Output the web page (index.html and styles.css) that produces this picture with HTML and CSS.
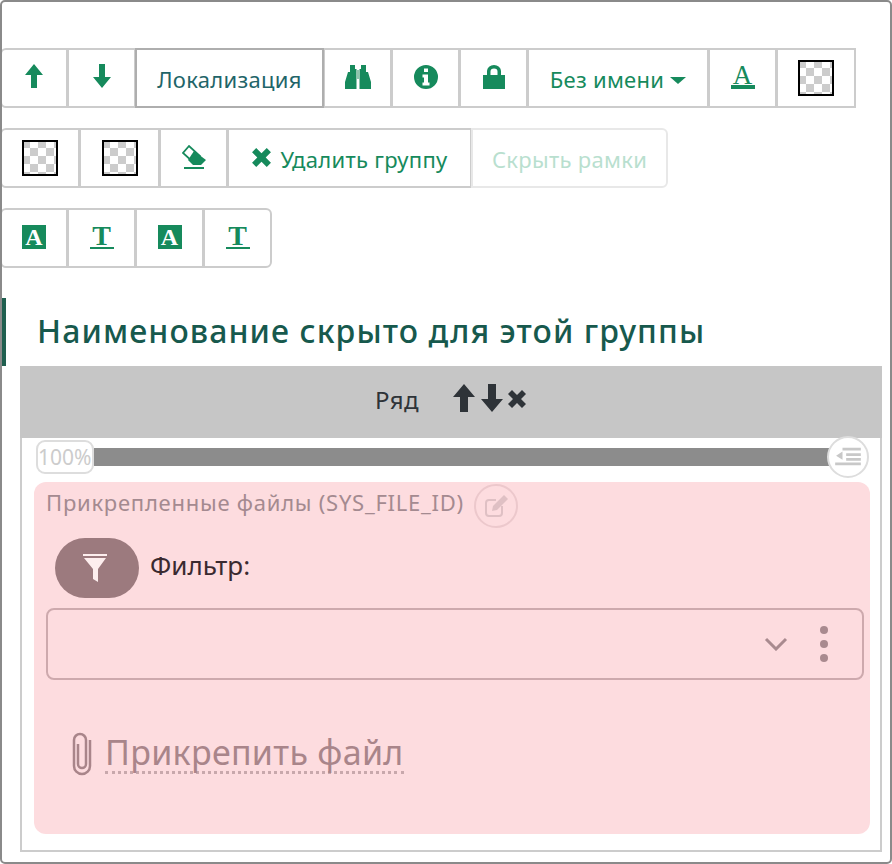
FILE: index.html
```html
<!DOCTYPE html>
<html lang="ru">
<head>
<meta charset="utf-8">
<title>Группа</title>
<link rel="stylesheet" href="styles.css">
</head>
<body>
<div class="frame">
  <div class="toolbars">
    <div class="toolbar">
      <button class="btn btn-icon"><svg class="ico ico-arrow" viewBox="0 0 18 24"><path d="M9 0 18 11H12V24H6V11H0Z"/></svg></button>
      <button class="btn btn-icon"><svg class="ico ico-arrow" viewBox="0 0 18 24"><path d="M6 0H12V13H18L9 24 0 13H6Z"/></svg></button>
      <button class="btn btn-text btn-active">Локализация</button>
      <button class="btn btn-icon"><svg class="ico ico-bino" viewBox="0 0 26 24"><path d="M5 0H10V4H11.500V24H0V17L3 7H5ZM16 0H21V7H23L26 17V24H14.500V4H16Z"/><rect class="bino-bridge" x="11.500" y="5" width="3" height="9"/></svg></button>
      <button class="btn btn-icon"><svg class="ico ico-lg" viewBox="0 0 24 24"><path fill-rule="evenodd" d="M12 0a12 12 0 1 0 0 24 12 12 0 0 0 0-24ZM10 3.500h4v3.500h-4ZM8.500 9.500H14V17.500H15.500V20.500H8.500V17.500H10V12.500H8.500Z"/></svg></button>
      <button class="btn btn-icon"><svg class="ico ico-lg" viewBox="0 0 24 24"><path fill-rule="evenodd" d="M1 10H5V6A7 6 0 0 1 19 6V10H23V24H1ZM8.500 10H15.500V6.500A3.500 3 0 0 0 8.500 6.500Z"/></svg></button>
      <button class="btn btn-text btn-green btn-name">Без имени<span class="caret"></span></button>
      <button class="btn btn-icon"><span class="letter letter-under">A</span></button>
      <button class="btn btn-swatch btn-swatch-end"><span class="swatch"></span></button>
    </div>
    <div class="toolbar">
      <button class="btn btn-swatch"><span class="swatch"></span></button>
      <button class="btn btn-swatch"><span class="swatch"></span></button>
      <button class="btn btn-icon"><svg class="ico ico-lg" viewBox="0 0 24 24"><path d="M7 1 1 8 12 18 18 11Z" fill="#fff" stroke="#168a5c" stroke-width="1.800"/><path d="M12 6 24 15 19 20H11L6 15Z" class="eraser-tip"/><rect x="2" y="22" width="20" height="2"/></svg></button>
      <button class="btn btn-text btn-green btn-delete"><svg class="ico ico-x" viewBox="0 0 20 20"><path d="M5 1 10 6 15 1 19 5 14 10 19 15 15 19 10 14 5 19 1 15 6 10 1 5Z"/></svg>Удалить группу</button>
      <button class="btn btn-text btn-green btn-disabled">Скрыть рамки</button>
    </div>
    <div class="toolbar">
      <button class="btn btn-icon"><span class="letter letter-box">A</span></button>
      <button class="btn btn-icon"><span class="letter letter-under letter-t">T</span></button>
      <button class="btn btn-icon"><span class="letter letter-box">A</span></button>
      <button class="btn btn-icon"><span class="letter letter-under letter-t">T</span></button>
    </div>
  </div>

  <h2 class="group-title">Наименование скрыто для этой группы</h2>

  <div class="row-box">
    <div class="row-head">
      <span class="row-name">Ряд</span>
      <span class="row-tools">
        <svg class="tool" viewBox="0 0 22 28"><path d="M11 0 22 13H15V28H7V13H0Z"/></svg>
        <svg class="tool" viewBox="0 0 22 28"><path d="M7 0H15V15H22L11 28 0 15H7Z"/></svg>
        <svg class="tool tool-x" viewBox="0 0 20 20"><path d="M5 1 10 6 15 1 19 5 14 10 19 15 15 19 10 14 5 19 1 15 6 10 1 5Z"/></svg>
      </span>
    </div>
    <div class="slider">
      <div class="slider-bar"></div>
      <span class="slider-thumb">100%</span>
      <span class="slider-end"><svg viewBox="0 0 32 24"><path d="M10 2H30V5H10ZM14 8H30V11H14ZM14 13H30V16H14ZM2 20V21H30V18H2ZM10 6V15L3 10.500Z"/></svg></span>
    </div>
    <div class="card">
      <div class="card-head">
        <span class="card-label">Прикрепленные файлы (SYS_FILE_ID)</span>
        <span class="edit-round"><svg viewBox="0 0 26 26"><path d="M19 13V20A3 3 0 0 1 16 23H6A3 3 0 0 1 3 20V10A3 3 0 0 1 6 7H13" fill="none" stroke-width="2"/><path d="M21 2 25 6 14 17 9 18 10 13Z" stroke="none"/></svg></span>
      </div>
      <div class="filter-row">
        <button class="filter-btn"><svg viewBox="0 0 24 28"><path d="M0 0H24V2H0ZM1 4H23L15 15V28L10 25V15Z"/></svg></button>
        <span class="filter-label">Фильтр:</span>
      </div>
      <div class="select">
        <svg class="chev" viewBox="0 0 24 14"><path d="M2 2 12 12 22 2" fill="none" stroke-width="3"/></svg>
        <span class="dots"><i></i><i></i><i></i></span>
      </div>
      <div class="attach">
        <svg class="clip" viewBox="0 0 24 44"><path d="M8 12V32A4 4 0 0 0 16 32V8A6 6 0 0 0 4 8V34A8 8 0 0 0 20 34V8" fill="none" stroke-width="2.500"/></svg>
        <span class="attach-link">Прикрепить файл</span>
      </div>
    </div>
  </div>
</div>
</body>
</html>
```
FILE: styles.css
```css
* { box-sizing: border-box; }
html, body { margin: 0; padding: 0; background: #fff; }
body { font-family: "Noto Sans", sans-serif; }
.frame {
  width: 892px;
  height: 864px;
  border: 2px solid #8a8a8a;
  border-radius: 5px;
  background: #fff;
  overflow: hidden;
  padding-top: 46px;
}
.toolbars { margin-left: -2px; display: flex; flex-direction: column; gap: 20px; }
.toolbar { display: flex; }
.btn {
  height: 60px;
  margin: 0 0 0 -1px;
  padding: 0;
  border: 2px solid #ccc;
  border-radius: 0;
  background: #fff;
  font: 22px "Noto Sans", sans-serif;
  letter-spacing: 0.3px;
  display: flex;
  align-items: center;
  justify-content: center;
  flex: none;
}
.toolbar .btn:first-child { margin-left: 0; width: 68px; border-radius: 6px 0 0 6px; }
.toolbar .btn-swatch:first-child { width: 80px; }
.toolbar:last-child .btn:last-child { border-radius: 0 6px 6px 0; }
.btn-icon { width: 69px; }
.btn-swatch { width: 81px; }
.btn-swatch-end { width: 80px; }
.btn-text { color: #1f6569; padding-top: 2px; }
.btn-active { border-color: #aeaeae; position: relative; z-index: 1; width: 189px; }
.btn-green { color: #168a5c; }
.btn-name { width: 182px; }
.btn-delete { width: 245px; gap: 8px; }
.btn-disabled { width: 197px; color: #b9dfcf; border-color: #e8e8e8; border-radius: 0 6px 6px 0; }
.ico { width: 22px; height: 22px; fill: #168a5c; }
.ico-arrow { width: 18px; height: 24px; margin-top: -4px; }
.ico-bino { width: 26px; height: 24px; margin-top: -3px; }
.bino-bridge { fill: #8fc4ad; }
.ico-lg { width: 24px; height: 24px; margin-top: -3px; }
.ico-x { width: 21px; height: 21px; margin-top: -3px; }
.caret {
  width: 0; height: 0;
  margin-left: 6px; margin-top: 2px;
  border: 8px solid transparent;
  border-top: 7px solid #168a5c;
  border-bottom: 0;
}
.swatch {
  width: 36px; height: 36px;
  border: 2px solid #000;
  background: conic-gradient(#fff 25%, #ccc 0 50%, #fff 0 75%, #ccc 0) -2px -2px / 16px 16px;
}
.letter {
  display: block;
  font: bold 24px/24px "Liberation Serif", serif;
  text-align: center;
  color: #168a5c;
  letter-spacing: 0;
}
.letter-under {
  width: 24px; height: 25px;
  margin-top: -3px;
  border-bottom: 4px solid #168a5c;
  font-size: 27px; line-height: 22px; font-weight: 400;
}
.letter-t { border-bottom-width: 2px; font-size: 28px; font-weight: 700; line-height: 23px; }
.letter-box { width: 24px; height: 24px; margin-top: -3px; background: #168a5c; color: #fff; }
.group-title {
  height: 68px;
  margin: 30px 0 0;
  padding: 0 0 0 31px;
  border-left: 4px solid #1f5f4f;
  font: 500 32px/66px "Noto Sans", sans-serif;
  letter-spacing: 1.1px;
  color: #17594d;
  white-space: nowrap;
}
.row-box {
  width: 862px;
  height: 486px;
  margin-left: 18px;
  border: solid #ccc;
  border-width: 0 2px 2px;
}
.row-head {
  height: 72px;
  margin: 0 -2px;
  padding: 0 0 6px;
  background: #c6c6c6;
  color: #2e3338;
  display: flex;
  align-items: center;
  justify-content: center;
  gap: 34px;
  font-size: 24px;
  letter-spacing: 0.5px;
}
.row-tools { display: flex; align-items: center; gap: 6px; margin-top: -2px; }
.tool { width: 22px; height: 28px; fill: #2e3338; }
.tool-x { width: 20px; height: 20px; margin-left: -2px; margin-top: 2px; }
.slider { position: relative; height: 44px; }
.slider-bar { position: absolute; left: 72px; right: 40px; top: 10px; height: 18px; background: #8c8c8c; }
.slider-thumb {
  position: absolute; left: 14px; top: 2px;
  width: 58px; height: 34px;
  border: 2px solid #ddd; border-radius: 9px;
  background: #fff; color: #ccc;
  font-size: 21px; line-height: 30px; white-space: nowrap;
}
.slider-end {
  position: absolute; right: 11px; top: -2px;
  width: 42px; height: 42px;
  border: 2px solid #ddd; border-radius: 50%;
  background: #fff;
  display: flex; align-items: center; justify-content: center;
}
.slider-end svg { width: 30px; height: 22px; fill: #c8c8c8; }
.card {
  width: 836px;
  height: 352px;
  margin-left: 12px;
  background: #fddcdf;
  border-radius: 12px;
  padding: 2px 6px 0 12px;
}
.card-head { display: flex; align-items: center; gap: 10px; height: 44px; }
.card-label { font-size: 22px; letter-spacing: 0.75px; color: #a48a90; margin-top: -8px; white-space: nowrap; }
.edit-round {
  width: 44px; height: 44px;
  border: 2px solid #ecc8cc; border-radius: 50%;
  display: flex; align-items: center; justify-content: center;
}
.edit-round svg { width: 26px; height: 26px; stroke: #dfc0c4; fill: #dfc0c4; }
.filter-row { display: flex; align-items: center; height: 60px; margin: 10px 0 10px 9px; gap: 11px; }
.filter-btn {
  width: 84px; height: 60px;
  border: 0; padding: 0 4px 0 0;
  border-radius: 30px;
  background: #9c7a7e;
  display: flex; align-items: center; justify-content: center;
}
.filter-btn svg { width: 24px; height: 28px; fill: #fdeeee; }
.filter-label { font-size: 26px; color: #3a2a30; margin-top: -6px; }
.select {
  height: 72px;
  border: 2px solid #cda9ad;
  border-radius: 8px;
  display: flex; align-items: center; justify-content: flex-end;
  gap: 32px;
  padding-right: 34px;
}
.chev { width: 24px; height: 14px; stroke: #a98a8f; }
.dots { display: flex; flex-direction: column; gap: 6px; }
.dots i { display: block; width: 8px; height: 8px; border-radius: 50%; background: #a98a8f; }
.attach { display: flex; align-items: center; gap: 11px; margin: 52px 0 0 24px; }
.clip { width: 24px; height: 44px; stroke: #a9858a; }
.attach-link {
  font-size: 34px;
  letter-spacing: 0.3px;
  line-height: 37px;
  color: #a9858a;
  border-bottom: 3px dotted #c8a8ac;
}
```
